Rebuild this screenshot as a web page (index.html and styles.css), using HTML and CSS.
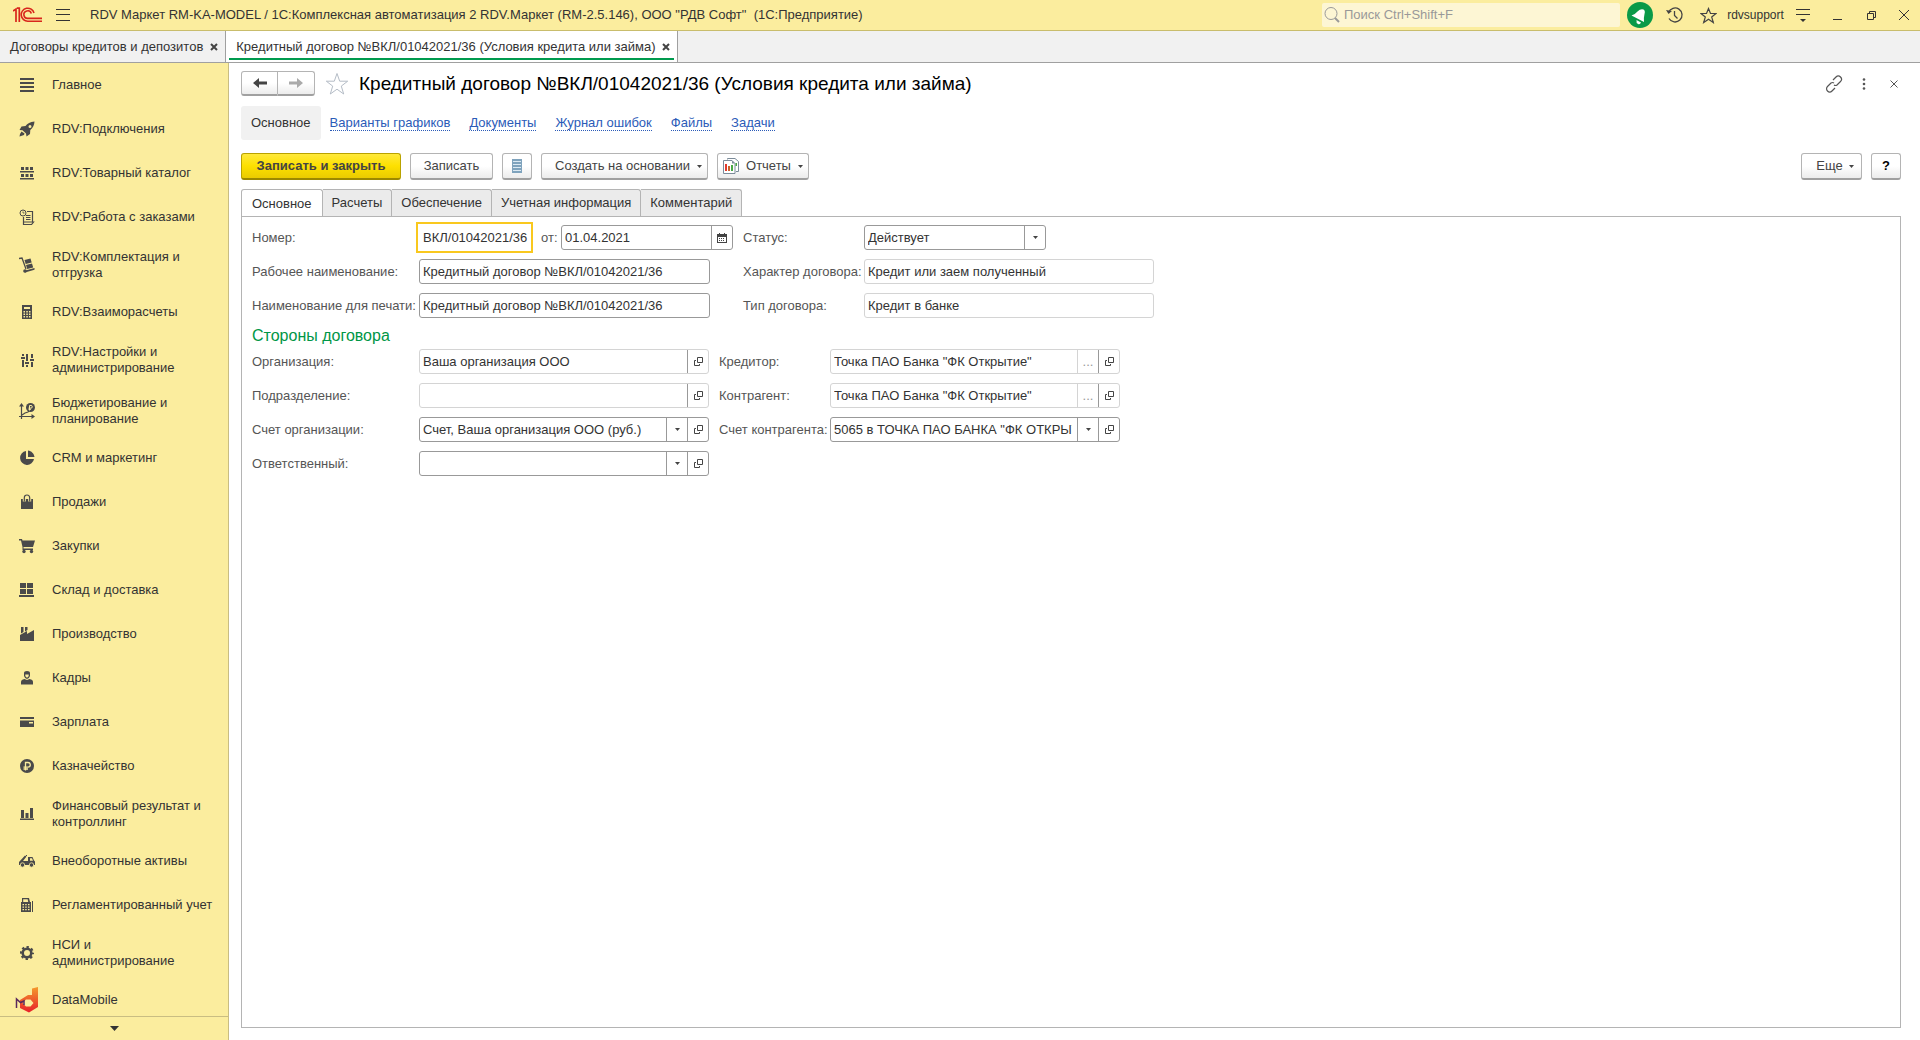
FILE: index.html
```html
<!DOCTYPE html>
<html lang="ru">
<head>
<meta charset="utf-8">
<title>Кредитный договор №ВКЛ/01042021/36</title>
<link rel="stylesheet" href="styles.css">
</head>
<body>
<svg class="defs" width="0" height="0" aria-hidden="true">
  <symbol id="open" viewBox="0 0 9 9"><path d="M3.500 .5h5v5h-5zM2 3.500H.5v5h5V7" fill="none" stroke="#444"/></symbol>
  <symbol id="caret" viewBox="0 0 5 3"><path d="M0 0h5L2.500 3z" fill="#444"/></symbol>
  <symbol id="cross" viewBox="0 0 8 8"><path d="M1 1l6 6M7 1L1 7" fill="none" stroke="#444" stroke-width="2"/></symbol>
</svg>
<header class="titlebar">
  <svg class="logo" width="30" height="16" viewBox="0 0 30 16" fill="none" stroke="#d8261c"><path d="M0 4l3-2v13M4 1.200h2.300V15" stroke-width="1.700"/><path d="M21 6A6.500 6.500 0 1 0 15 14.200H29" stroke-width="1.600"/><path d="M18.300 6.500A3.800 3.800 0 1 0 15 11.400H29" stroke-width="1.600"/></svg>
  <button class="ghost burger" aria-label="Меню"><svg width="14" height="12" viewBox="0 0 14 12"><path d="M0 .5h14M0 5.500h14M0 11.500h14" stroke="#333"/></svg></button>
  <span class="app-title">RDV Маркет RM-KA-MODEL / 1С:Комплексная автоматизация 2 RDV.Маркет (RM-2.5.146), ООО "РДВ Софт"&nbsp; (1С:Предприятие)</span>
  <label class="search"><svg width="16" height="18" viewBox="0 0 16 18" fill="none" stroke="#999"><circle cx="7" cy="7.500" r="6"/><path d="M11 12l4 4" stroke-width="2"/></svg><input type="search" placeholder="Поиск Ctrl+Shift+F" aria-label="Поиск"></label>
  <button class="ghost bell" aria-label="Уведомления"><svg width="26" height="30" viewBox="0 0 26 30"><circle cx="13" cy="15" r="13" fill="#0a9a48"/><path d="M4.500 15.500Q8 14.500 10.500 11.500 13.500 8.500 16.500 9.500 18.500 10.500 17.500 14 16.500 18 17 22z" fill="#fff"/><path d="M9.500 20l4.500 2.500q-1 2.500-3 1.500t-1.500-4z" fill="#fff"/></svg></button>
  <button class="ghost w34" aria-label="История"><svg width="17" height="18" viewBox="0 0 17 18" fill="none" stroke="#444" stroke-width="1.300"><path d="M2.500 6.500A7 7 0 1 1 3 12.500M8.500 5v4.500l3 3"/><path d="M0 4l2.500 4L6 5z" fill="#444" stroke="none"/></svg></button>
  <button class="ghost w34" aria-label="Избранное"><svg width="17" height="17" viewBox="0 0 17 17"><path d="M8.500 1.500l2 5h5.500l-4.300 3.500 1.600 5.500-4.800-3.300-4.800 3.300L5.300 10 1 6.500h5.500z" fill="none" stroke="#444" stroke-width="1.200"/></svg></button>
  <button class="ghost user">rdvsupport</button>
  <button class="ghost w34" aria-label="Настройки"><svg width="14" height="16" viewBox="0 0 14 16"><path d="M0 2.500h14M0 7.500h14" stroke="#333"/><path d="M4 12h6l-3 3z" fill="#333"/></svg></button>
  <button class="ghost w34" aria-label="Свернуть"><svg width="9" height="10" viewBox="0 0 9 10"><path d="M0 9.500h9" stroke="#333"/></svg></button>
  <button class="ghost w34" aria-label="Восстановить"><svg width="9" height="9" viewBox="0 0 9 9"><path d="M2.500 2V.5h6v6H7M.5 2.500h6v6h-6z" fill="none" stroke="#333"/></svg></button>
  <button class="ghost w32" aria-label="Закрыть"><svg width="10" height="10" viewBox="0 0 10 10"><path d="M0 0l10 10M10 0L0 10" stroke="#333"/></svg></button>
</header>
<nav class="windows">
  <div class="window"><a href="#">Договоры кредитов и депозитов</a><button class="ghost" aria-label="Закрыть вкладку"><svg width="8" height="8"><use href="#cross"/></svg></button></div>
  <div class="window window--on"><a href="#">Кредитный договор №ВКЛ/01042021/36 (Условия кредита или займа)</a><button class="ghost" aria-label="Закрыть вкладку"><svg width="8" height="8"><use href="#cross"/></svg></button></div>
</nav>
<div class="body">
  <aside class="side">
    <nav class="menu">
      <a href="#"><svg viewBox="0 0 16 16"><path d="M1 1h14v2H1zM1 5h14v2H1zM1 9h14v2H1zM1 13h14v2H1z"/></svg><span>Главное</span></a>
      <a href="#"><svg viewBox="0 0 16 16"><path fill-rule="evenodd" d="M15.500 .5C11 1 8.500 2.500 6.500 5L2.500 5.500 .5 9l3 .3L7 12.500l.5 3L11 13l.3-4C14 7 15.300 4 15.500 .5zM11 4a1.500 1.500 0 1 1 0 3 1.500 1.500 0 0 1 0-3zM2.500 10.500L1 13l-.5 2.500L5 14l.5-1.500z"/></svg><span>RDV:Подключения</span></a>
      <a href="#"><svg viewBox="0 0 16 16"><path d="M2 2h3v3H2zM6.500 2h3v3h-3zM11 2h3v3h-3zM1 6h14v1.500H1zM2 9h3v3H2zM6.500 9h3v3h-3zM11 9h3v3h-3zM1 13h14v1.500H1z"/></svg><span>RDV:Товарный каталог</span></a>
      <a href="#"><svg viewBox="0 0 16 16" fill="none"><path d="M8 2.500h5.500V13M4.500 8v7.500h8l2-2.500H5M7 6.500h4.500M7 8.500h4.500M7 10.500h4.500" stroke="#4a4a4a" stroke-width="1.200"/><circle cx="4" cy="4" r="3" stroke="#4a4a4a"/><path d="M4 2.500V4h1.500" stroke="#4a4a4a" stroke-width=".8"/></svg><span>RDV:Работа с заказами</span></a>
      <a class="tall" href="#"><svg viewBox="0 0 16 16"><path d="M0 1.500L3 1l4 11" fill="none" stroke="#4a4a4a" stroke-width="1.300"/><path d="M5.500 3l6-1.500 1.200 4-6 1.500zM7 8l6-1.500 1.200 4-6 1.500zM4.500 14L15.500 11v1.700L6 15.500z"/><circle cx="6" cy="14" r="1.800"/></svg><span>RDV:Комплектация и отгрузка</span></a>
      <a href="#"><svg viewBox="0 0 16 16"><path fill-rule="evenodd" d="M3 1h10v14H3zM5 3v2h6V3zM4.500 7v1.500H6V7zM7.300 7v1.500h1.500V7zM10 7v1.500h1.500V7zM4.500 9.500V11H6V9.500zM7.300 9.500V11h1.500V9.500zM10 9.500V11h1.500V9.500zM4.500 12v1.500H6V12zM7.300 12v1.500h1.500V12zM10 12v1.500h1.500V12z"/></svg><span>RDV:Взаиморасчеты</span></a>
      <a class="tall" href="#"><svg viewBox="0 0 16 16"><path d="M3 2h2v2H3zM2 5h4v2H2zM3 8h2v7H3zM7 2h2v7H7zM6 10h4v2H6zM7 13h2v2H7zM12 2h2v4h-2zM11 7h4v2h-4zM12 10h2v5h-2z"/></svg><span>RDV:Настройки и администрирование</span></a>
      <a class="tall" href="#"><svg viewBox="0 0 16 16"><path d="M2.500 16V2M0 13.500h14M3 12l3-2 3-1 3-3" fill="none" stroke="#4a4a4a" stroke-width="1.200"/><path d="M2.500 0L5 3.500H0zM16 13.500L12.500 11v5z"/><circle cx="11.500" cy="4.500" r="4.500"/><path d="M10.500 7.500v-5H12a1.300 1.300 0 0 1 0 2.600H9.500M9.500 6.300H12" fill="none" stroke="#fbed9e"/></svg><span>Бюджетирование и планирование</span></a>
      <a href="#"><svg viewBox="0 0 16 16"><path d="M7 1a7 7 0 1 0 8 8H7zM9 .5V7h6.500C15 3.500 12.500 1 9 .5z"/></svg><span>CRM и маркетинг</span></a>
      <a href="#"><svg viewBox="0 0 16 16"><path d="M2 5h12v10H2z"/><path d="M5.300 7.500V4q0-3 2.700-3t2.700 3v3.500" fill="none" stroke="#fbed9e" stroke-width="3"/><path d="M5.300 7.500V4q0-3 2.700-3t2.700 3v3.500" fill="none" stroke="#4a4a4a" stroke-width="1.200"/></svg><span>Продажи</span></a>
      <a href="#"><svg viewBox="0 0 16 16"><path d="M0 1h3l.5 1.500H16L14 9H4.500v1.500H14V12H3.500V9L2 2.500H0z"/><circle cx="5" cy="13.500" r="1.700"/><circle cx="12.500" cy="13.500" r="1.700"/></svg><span>Закупки</span></a>
      <a href="#"><svg viewBox="0 0 16 16"><path d="M1 1h6v5H1zM8 1h6v5H8zM1 7h6v5H1zM8 7h6v5H8zM0 13h15v2H0z"/></svg><span>Склад и доставка</span></a>
      <a href="#"><svg viewBox="0 0 16 16"><path d="M1 15V9l7-4v3l7-4v11zM2 1h2.500v5L2 7.500zM6 1h2.500v3L6 5.500z"/></svg><span>Производство</span></a>
      <a href="#"><svg viewBox="0 0 16 16"><path d="M5 3q0-2 3-2t3 2v3q-1 3-3 3T5 6zM2 12q0-2.500 3.500-3l2.500 1 2.500-1Q14 9.500 14 12v2.500H2z"/><path d="M6.300 4.500h3.400v1.500Q9 7.500 8 7.500T6.300 6z" fill="#fbed9e"/></svg><span>Кадры</span></a>
      <a href="#"><svg viewBox="0 0 16 16"><path fill-rule="evenodd" d="M1 3h14v2H1zM1 6.500h14V13H1zM10 8v1.500h4V8z"/></svg><span>Зарплата</span></a>
      <a href="#"><svg viewBox="0 0 16 16"><circle cx="8" cy="8" r="7"/><path d="M6.500 12.500v-8H9a2.300 2.300 0 0 1 0 4.600H4.500M4.500 11H9" fill="none" stroke="#fbed9e" stroke-width="1.300"/></svg><span>Казначейство</span></a>
      <a class="tall" href="#"><svg viewBox="0 0 16 16"><path d="M2 4h3v8H2zM6.500 7h3v5h-3zM11 2h3v10h-3zM1 12.500h14v1.500H1z"/></svg><span>Финансовый результат и контроллинг</span></a>
      <a href="#"><svg viewBox="0 0 16 16"><path fill-rule="evenodd" d="M0 9l6-6.500L7.500 3.500 4 8h5V4h4.500L15 7.500l1 1V12H0zM11 5.200v2.500h3l-1-2.500z"/><path d="M3 7l5-5" stroke="#4a4a4a"/><g stroke="#fbed9e" stroke-width=".8"><circle cx="3.500" cy="12" r="2.200"/><circle cx="12.500" cy="12" r="2.200"/></g></svg><span>Внеоборотные активы</span></a>
      <a href="#"><svg viewBox="0 0 16 16"><path fill-rule="evenodd" d="M3 1h7l1 4h1v10H2V5h1zM4.200 2.200V5h5l-.5-2.800zM3.500 7v1.300H5V7zM6.200 7v1.300h1.500V7zM9 7v1.300h1.500V7zM3.500 9.500v1.300H5V9.500zM6.200 9.500v1.300h1.500V9.500zM9 9.500v1.300h1.500V9.500zM3.500 12v1.300H5V12zM6.200 12v1.300h1.500V12zM9 12v1.300h1.500V12zM13 4h1v11h-1z"/></svg><span>Регламентированный учет</span></a>
      <a class="tall" href="#"><svg viewBox="0 0 16 16" fill="none" stroke="#4a4a4a"><circle cx="8" cy="8" r="4.300" stroke-width="2.600"/><circle cx="8" cy="8" r="6" stroke-width="2" stroke-dasharray="2.400 2.312" stroke-dashoffset="1.200"/></svg><span>НСИ и администрирование</span></a>
      <a href="#"><svg class="dm" viewBox="0 0 24 26"><defs><linearGradient id="g" x1="0" y1="0" x2="0" y2="1"><stop offset="0" stop-color="#f49a2c"/><stop offset="1" stop-color="#e8202a"/></linearGradient></defs><path fill-rule="evenodd" fill="url(#g)" d="M17 1.500L23 0v20l-9 5.500L5 21v-8l8-5h4zM11 12.500L7.500 16l3.500 3.500h4.500L18.500 16l-3-3.500z"/><path d="M1.500 21v-9l4 3.500 3.500-1.500v4" fill="none" stroke="#5a2a5c" stroke-width="1.500"/></svg><span>DataMobile</span></a>
    </nav>
    <button class="ghost more" aria-label="Прокрутить меню"><svg width="9" height="5" viewBox="0 0 9 5"><path d="M0 0h9L4.500 5z" fill="#333"/></svg></button>
  </aside>
  <main class="main">
    <div class="head">
      <div class="history">
        <button aria-label="Назад"><svg width="14" height="10" viewBox="0 0 14 10"><path d="M0 5l6-5v3.500h8v3H6V10z" fill="#444"/></svg></button>
        <button aria-label="Вперед"><svg width="14" height="10" viewBox="0 0 14 10"><path d="M14 5L8 0v3.500H0v3h8V10z" fill="#aaa"/></svg></button>
      </div>
      <button class="ghost" aria-label="В избранное"><svg width="24" height="24" viewBox="0 0 24 24"><path d="M12 1.500l2.700 7.700h8l-6.400 4.900 2.400 7.900-6.700-4.800L5.300 22l2.400-7.900L1.300 9.200h8z" fill="none" stroke="#b4bcc6"/></svg></button>
      <h1>Кредитный договор №ВКЛ/01042021/36 (Условия кредита или займа)</h1>
      <div class="head-tools">
        <button class="ghost" aria-label="Получить ссылку"><svg width="18" height="18" viewBox="0 0 18 18" fill="none" stroke="#555" stroke-width="1.200"><path d="M8 5l3-3a3 3 0 0 1 4.500 4.500L12 10q-1.500 1-3 0M10 13l-3 3a3 3 0 0 1-4.500-4.500L6 8q1.500-1 3 0"/></svg></button>
        <button class="ghost" aria-label="Еще действия"><svg width="4" height="12" viewBox="0 0 4 12" fill="#555"><circle cx="2" cy="1.500" r="1.300"/><circle cx="2" cy="6" r="1.300"/><circle cx="2" cy="10.500" r="1.300"/></svg></button>
        <button class="ghost" aria-label="Закрыть форму"><svg width="8" height="8" viewBox="0 0 8 8"><path d="M.5 .5l7 7M7.500 .5l-7 7" stroke="#555"/></svg></button>
      </div>
    </div>
    <nav class="links">
      <span class="current">Основное</span>
      <a href="#">Варианты графиков</a><a href="#">Документы</a><a href="#">Журнал ошибок</a><a href="#">Файлы</a><a href="#">Задачи</a>
    </nav>
    <div class="tools">
      <button class="btn btn--main">Записать и закрыть</button>
      <button class="btn btn--save">Записать</button>
      <button class="btn btn--icon" aria-label="Реестр"><svg width="10" height="14" viewBox="0 0 10 14"><path d="M0 0h10v14H0z" fill="#7fa3bd"/><path d="M1 2.500h8M1 5.500h8M1 8.500h8M1 11.500h8" stroke="#dbe9f3"/></svg></button>
      <button class="btn btn--create">Создать на основании<svg width="5" height="3"><use href="#caret"/></svg></button>
      <button class="btn btn--report"><svg width="16" height="16" viewBox="0 0 16 16"><path d="M4.500 1.500V.5H12l3.500 3v10H13" fill="#fff" stroke="#7b8b99"/><path d="M.5 2.500H9l3 3v10H.5z" fill="#fff" stroke="#7b8b99"/><path d="M9 2.500v3h3z" fill="#7b8b99"/><path d="M2 6h2v7H2z" fill="#e33b2e"/><path d="M5 8h2v5H5z" fill="#c9622c"/><path d="M8 7h2v6H8zM12.500 5h1.500v3h-1.500z" fill="#4aa846"/></svg><span>Отчеты</span><svg width="5" height="3"><use href="#caret"/></svg></button>
      <button class="btn btn--more">Еще<svg width="5" height="3"><use href="#caret"/></svg></button>
      <button class="btn btn--icon btn--help">?</button>
    </div>
    <div class="tabs" role="tablist">
      <button class="tab tab--on" role="tab" aria-selected="true">Основное</button>
      <button class="tab" role="tab">Расчеты</button>
      <button class="tab" role="tab">Обеспечение</button>
      <button class="tab" role="tab">Учетная информация</button>
      <button class="tab" role="tab">Комментарий</button>
    </div>
    <form class="panel">
      <div class="group">
        <div class="col">
          <div class="row row--number">
            <label for="num">Номер:</label>
            <div class="field field--num"><input id="num" value="ВКЛ/01042021/36"></div>
            <label class="from" for="date">от:</label>
            <div class="field field--date"><input id="date" value="01.04.2021"><button type="button" aria-label="Календарь"><svg width="10" height="10" viewBox="0 0 10 10"><path fill-rule="evenodd" d="M0 1h10v9H0zM1 4v5h8V4z" fill="#444"/><path d="M2.500 0v2M7.500 0v2M2 5.500h6M2 7.500h6" stroke="#444" stroke-dasharray="1 1"/></svg></button></div>
          </div>
          <div class="row"><label for="work">Рабочее наименование:</label><div class="field field--name"><input id="work" value="Кредитный договор №ВКЛ/01042021/36"></div></div>
          <div class="row"><label for="print">Наименование для печати:</label><div class="field field--name"><input id="print" value="Кредитный договор №ВКЛ/01042021/36"></div></div>
        </div>
        <div class="col col--kind">
          <div class="row"><label for="status">Статус:</label><div class="field field--status"><select id="status"><option>Действует</option></select><span class="drop"><svg width="5" height="3"><use href="#caret"/></svg></span></div></div>
          <div class="row"><label for="kind">Характер договора:</label><div class="field field--ro"><input id="kind" readonly value="Кредит или заем полученный"></div></div>
          <div class="row"><label for="type">Тип договора:</label><div class="field field--ro"><input id="type" readonly value="Кредит в банке"></div></div>
        </div>
      </div>
      <h2>Стороны договора</h2>
      <div class="group">
        <div class="col">
          <div class="row"><label for="org">Организация:</label><div class="field field--ro"><input id="org" readonly value="Ваша организация ООО"><button type="button" aria-label="Открыть"><svg width="9" height="9"><use href="#open"/></svg></button></div></div>
          <div class="row"><label for="dep">Подразделение:</label><div class="field field--ro"><input id="dep" readonly><button type="button" aria-label="Открыть"><svg width="9" height="9"><use href="#open"/></svg></button></div></div>
          <div class="row"><label for="acc">Счет организации:</label><div class="field"><select id="acc"><option>Счет, Ваша организация ООО (руб.)</option></select><span class="drop"><svg width="5" height="3"><use href="#caret"/></svg></span><button type="button" aria-label="Открыть"><svg width="9" height="9"><use href="#open"/></svg></button></div></div>
          <div class="row"><label for="resp">Ответственный:</label><div class="field"><select id="resp"><option></option></select><span class="drop"><svg width="5" height="3"><use href="#caret"/></svg></span><button type="button" aria-label="Открыть"><svg width="9" height="9"><use href="#open"/></svg></button></div></div>
        </div>
        <div class="col col--bank">
          <div class="row"><label for="cred">Кредитор:</label><div class="field field--ro"><input id="cred" readonly value="Точка ПАО Банка &quot;ФК Открытие&quot;"><button type="button" class="pick" disabled>...</button><button type="button" aria-label="Открыть"><svg width="9" height="9"><use href="#open"/></svg></button></div></div>
          <div class="row"><label for="agent">Контрагент:</label><div class="field field--ro"><input id="agent" readonly value="Точка ПАО Банка &quot;ФК Открытие&quot;"><button type="button" class="pick" disabled>...</button><button type="button" aria-label="Открыть"><svg width="9" height="9"><use href="#open"/></svg></button></div></div>
          <div class="row"><label for="acc2">Счет контрагента:</label><div class="field"><select id="acc2"><option>5065 в ТОЧКА ПАО БАНКА "ФК ОТКРЫТИЕ"</option></select><span class="drop"><svg width="5" height="3"><use href="#caret"/></svg></span><button type="button" aria-label="Открыть"><svg width="9" height="9"><use href="#open"/></svg></button></div></div>
        </div>
      </div>
    </form>
  </main>
</div>
</body>
</html>
```
FILE: styles.css
```css
* { box-sizing: border-box; }
body {
  margin: 0;
  height: 100vh;
  display: flex;
  flex-direction: column;
  overflow: hidden;
  font: 13px/16px "Liberation Sans", Arial, sans-serif;
  color: #333;
  background: #fff;
}
button, input, select { font: inherit; color: inherit; margin: 0; }
svg { display: block; flex: none; }
.defs { position: absolute; }
a { color: inherit; text-decoration: none; }
.ghost {
  display: flex;
  align-items: center;
  justify-content: center;
  padding: 0;
  border: 0;
  background: none;
}

/* title bar */
.titlebar {
  display: flex;
  align-items: center;
  flex: none;
  height: 31px;
  padding-left: 13px;
  background: #fbed9e;
  border-bottom: 1px solid #c9bd6c;
}
.burger { width: 14px; margin: 0 20px 0 13px; }
.app-title { flex: 1; white-space: nowrap; overflow: hidden; }
.search {
  display: flex;
  align-items: center;
  gap: 4px;
  width: 298px;
  height: 24px;
  padding-left: 2px;
  border-radius: 2px;
  background: #fdf6d4;
}
.search input { flex: 1; min-width: 0; padding: 0; border: 0; outline: 0; background: none; }
.search input::placeholder { color: #999; }
.bell { width: 26px; margin: 0 4px 0 7px; }
.w34 { width: 34px; height: 30px; }
.w32 { width: 32px; height: 30px; }
.user { width: 61px; font-size: 12px; }

/* open windows */
.windows {
  display: flex;
  flex: none;
  height: 32px;
  background: #f1f1f1;
  border-bottom: 1px solid #a0a0a0;
}
.window {
  display: flex;
  align-items: center;
  gap: 7px;
  padding: 0 7px 0 10px;
  border-right: 1px solid #a0a0a0;
}
.window--on {
  background: linear-gradient(#009a4e, #009a4e) 3px 27px / calc(100% - 6px) 2px no-repeat #fff;
}

.body { display: flex; flex: 1; min-height: 0; }

/* section menu */
.side {
  display: flex;
  flex-direction: column;
  flex: none;
  width: 229px;
  background: #fbed9e;
  border-right: 1px solid #c9bd82;
}
.menu { flex: 1; min-height: 0; overflow: hidden; }
.menu a {
  display: flex;
  align-items: center;
  gap: 17px;
  height: 44px;
  padding: 0 13px 0 19px;
}
.menu .tall { height: 51px; }
.menu svg { width: 16px; height: 16px; fill: #4a4a4a; }
.menu svg[fill="none"] { fill: none; }
.menu svg.dm { width: 24px; height: 26px; margin: 0 -4px; }
.more { flex: none; height: 24px; border-top: 1px solid #c9bd82; }

/* form */
.main {
  display: flex;
  flex-direction: column;
  flex: 1;
  min-width: 0;
  padding: 8px 19px 12px 12px;
}
.head { display: flex; align-items: center; gap: 10px; height: 25px; }
.history { display: flex; }
.history button, .btn {
  display: flex;
  align-items: center;
  justify-content: center;
  padding: 0;
  border: 1px solid #b4b4b4;
  border-bottom: 2px solid #a0a0a0;
  border-radius: 3px;
  background: linear-gradient(#fff 50%, #ececec);
}
.history button { width: 37px; height: 25px; border-radius: 3px 0 0 3px; }
.history button + button { border-left: 0; border-radius: 0 3px 3px 0; }
h1 { margin: 0; font-size: 19px; line-height: 24px; font-weight: 400; color: #000; }
.head-tools { display: flex; margin-left: auto; margin-right: -8px; }
.head-tools button { width: 30px; height: 25px; }
.links { display: flex; align-items: center; gap: 19px; height: 34px; margin-top: 10px; }
.current {
  padding: 9px 10px;
  margin-right: -10px;
  border-radius: 3px;
  background: #f1f1f1;
}
.links a { line-height: 14px; color: #2b5bb8; border-bottom: 1px dotted #2b5bb8; }

.tools { display: flex; gap: 9px; margin-top: 13px; }
.btn { height: 27px; color: #444; }
.btn--main {
  width: 160px;
  font-weight: 700;
  background: linear-gradient(#ffe93a, #fde000 50%, #eacb00);
  border-color: #b9a200 #b9a200 #9c8800;
}
.btn--save { width: 83px; }
.btn--icon { width: 30px; }
.btn--create { width: 167px; gap: 7px; padding-left: 8px; }
.btn--report { width: 92px; gap: 7px; }
.btn--more { width: 61px; gap: 6px; padding-left: 7px; margin-left: auto; }
.btn--help { font-weight: 700; color: #000; }

.tabs { display: flex; margin-top: 9px; }
.tab {
  height: 27px;
  padding: 0 9px;
  border: 1px solid #b4b4b4;
  border-width: 1px 1px 0 0;
  border-radius: 0 3px 0 0;
  background: #ebebeb;
}
.tab--on {
  height: 28px;
  margin-bottom: -1px;
  padding: 0 10px;
  border-left-width: 1px;
  border-radius: 3px 3px 0 0;
  background: #fff;
}
.panel {
  flex: 1;
  padding: 8px 10px;
  border: 1px solid #b4b4b4;
}
.group { display: flex; gap: 10px; }
.col { display: flex; flex-direction: column; gap: 9px; }
.row { display: flex; align-items: center; height: 25px; }
.row label { flex: none; width: 167px; color: #555; white-space: nowrap; }
.row .from { width: 31px; padding-left: 11px; }
.col--kind label { width: 121px; }
.col--bank label { width: 111px; }
.field {
  display: flex;
  width: 290px;
  height: 25px;
  border: 1px solid #999;
  border-radius: 3px;
  background: #fff;
}
.field input, .field select {
  flex: 1;
  min-width: 0;
  height: 100%;
  padding: 0 0 0 3px;
  border: 0;
  outline: 0;
  border-radius: 3px;
  background: none;
  appearance: none;
}
.field select { padding-right: 5px; }
.field button, .drop {
  display: flex;
  align-items: center;
  justify-content: center;
  flex: none;
  width: 21px;
  padding: 0;
  border: 0;
  border-left: 1px solid #999;
  background: none;
}
.field--name { width: 291px; }
.field--num { width: 111px; border-color: #fff; border-radius: 0; outline: 2px solid #f9c81e; outline-offset: 1px; }
.field--date { width: 172px; }
.field--status { width: 182px; }
.field--ro { border-color: #d4d4d4; }
.field .pick { border-color: #d4d4d4; color: #999; }
h2 { margin: 8px 0 4px; font-size: 16px; line-height: 19px; font-weight: 400; color: #009646; }
```
